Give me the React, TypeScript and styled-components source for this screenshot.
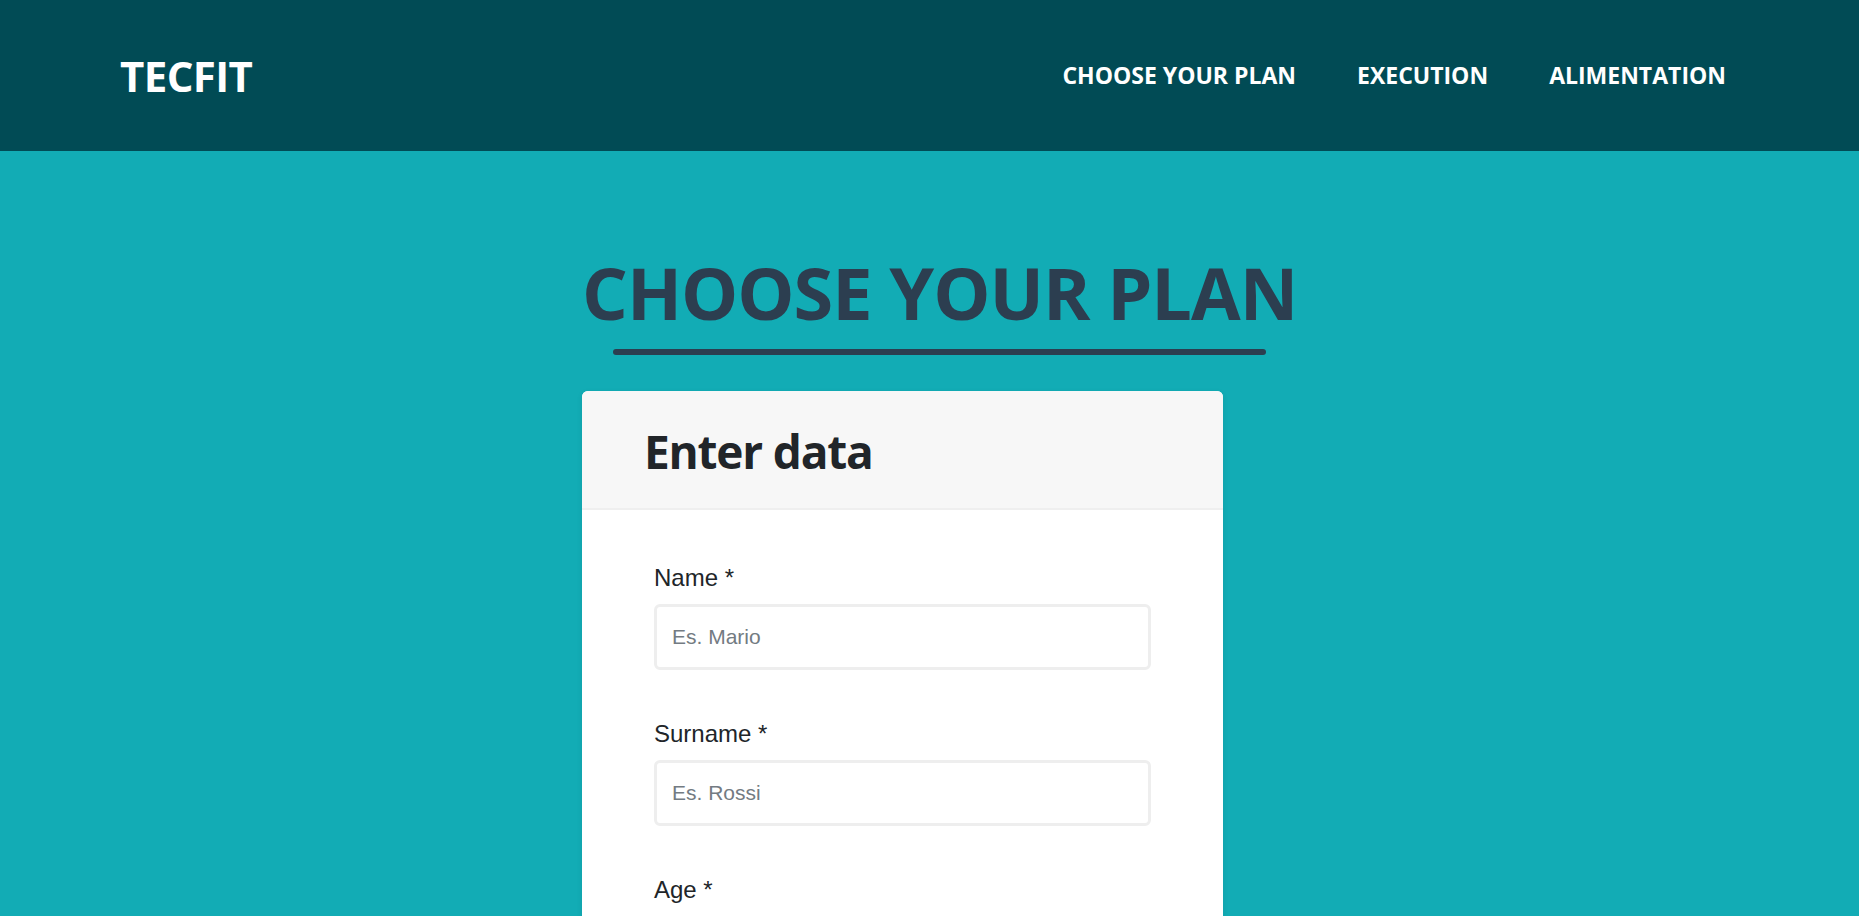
import React from 'react'
import styled, { createGlobalStyle } from 'styled-components'

const fields = [
  { label: 'Name *', placeholder: 'Es. Mario' },
  { label: 'Surname *', placeholder: 'Es. Rossi' },
  { label: 'Age *', placeholder: 'Es. 25' },
]

export default function App() {
  return (
    <>
      <S_Global />
      <S_Header>
        <S_Brand>TECFIT</S_Brand>
        <S_Nav>
          <S_NavLink href="#">CHOOSE YOUR PLAN</S_NavLink>
          <S_NavLink href="#">EXECUTION</S_NavLink>
          <S_NavLink href="#">ALIMENTATION</S_NavLink>
        </S_Nav>
      </S_Header>
      <S_Main>
        <S_Column>
          <S_TitleBlock>
            <S_Title>CHOOSE YOUR PLAN</S_Title>
            <S_Underline />
          </S_TitleBlock>
          <S_Card>
            <S_CardHeader>
              <S_CardTitle>Enter data</S_CardTitle>
            </S_CardHeader>
            <S_CardBody>
              {fields.map((f, i) => (
                <S_Field key={i}>
                  <S_Label>{f.label}</S_Label>
                  <S_Input type="text" placeholder={f.placeholder} />
                </S_Field>
              ))}
            </S_CardBody>
          </S_Card>
        </S_Column>
      </S_Main>
    </>
  )
}

const S_Global = createGlobalStyle`
  * { box-sizing: border-box; }
  body {
    margin: 0;
    background: #12acb5;
    font-family: 'Open Sans', 'Noto Sans', sans-serif;
    overflow: hidden;
  }
`

const S_Header = styled.header`
  height: 151px;
  background: #014b55;
  display: flex;
  align-items: center;
  justify-content: space-between;
  padding: 0 133px 0 120px;
`

const S_Brand = styled.div`
  color: #ffffff;
  font-weight: 700;
  font-size: 42px;
  letter-spacing: -0.6px;
  line-height: 1;
`

const S_Nav = styled.nav`
  display: flex;
  gap: 61px;
`

const S_NavLink = styled.a`
  color: #ffffff;
  text-decoration: none;
  font-weight: 700;
  font-size: 23px;
  line-height: 1;
`

const S_Main = styled.main`
  padding-top: 98px;
`

const S_Column = styled.div`
  width: 695px;
  margin: 0 auto;
  display: flex;
  flex-direction: column;
  align-items: flex-start;
`

const S_TitleBlock = styled.div`
  display: inline-block;
`

const S_Title = styled.h1`
  margin: 0;
  color: #2c3e50;
  font-weight: 700;
  font-size: 72px;
  letter-spacing: -1px;
  line-height: 1.2;
  white-space: nowrap;
`

const S_Underline = styled.div`
  height: 6px;
  margin: 14px 31px 0;
  border-radius: 3px;
  background: #2c3e50;
`

const S_Card = styled.section`
  margin-top: 36px;
  width: 641px;
  background: #ffffff;
  border-radius: 6px;
  overflow: hidden;
  box-shadow: 0 2px 6px rgb(0 0 0 / 8%);
`

const S_CardHeader = styled.div`
  height: 119px;
  display: flex;
  align-items: center;
  padding: 4px 0 0 62px;
  background: #f7f7f7;
  border-bottom: 2px solid #efefef;
`

const S_CardTitle = styled.h2`
  margin: 0;
  color: #212529;
  font-weight: 700;
  font-size: 46px;
  letter-spacing: -1.2px;
  line-height: 1.2;
`

const S_CardBody = styled.div`
  padding: 50px 72px 48px;
`

const S_Field = styled.div`
  margin-bottom: 46px;
`

const S_Label = styled.label`
  display: block;
  margin-bottom: 8px;
  color: #212529;
  font-family: 'Liberation Sans', Arial, sans-serif;
  font-size: 24px;
  line-height: 36px;
`

const S_Input = styled.input`
  display: block;
  width: 100%;
  height: 66px;
  padding: 0 15px;
  border: 3px solid #eeeeee;
  border-radius: 6px;
  background: #ffffff;
  color: #212529;
  font-family: 'Liberation Sans', Arial, sans-serif;
  font-size: 21px;
  outline: none;

  &::placeholder {
    color: #737b82;
  }
`
